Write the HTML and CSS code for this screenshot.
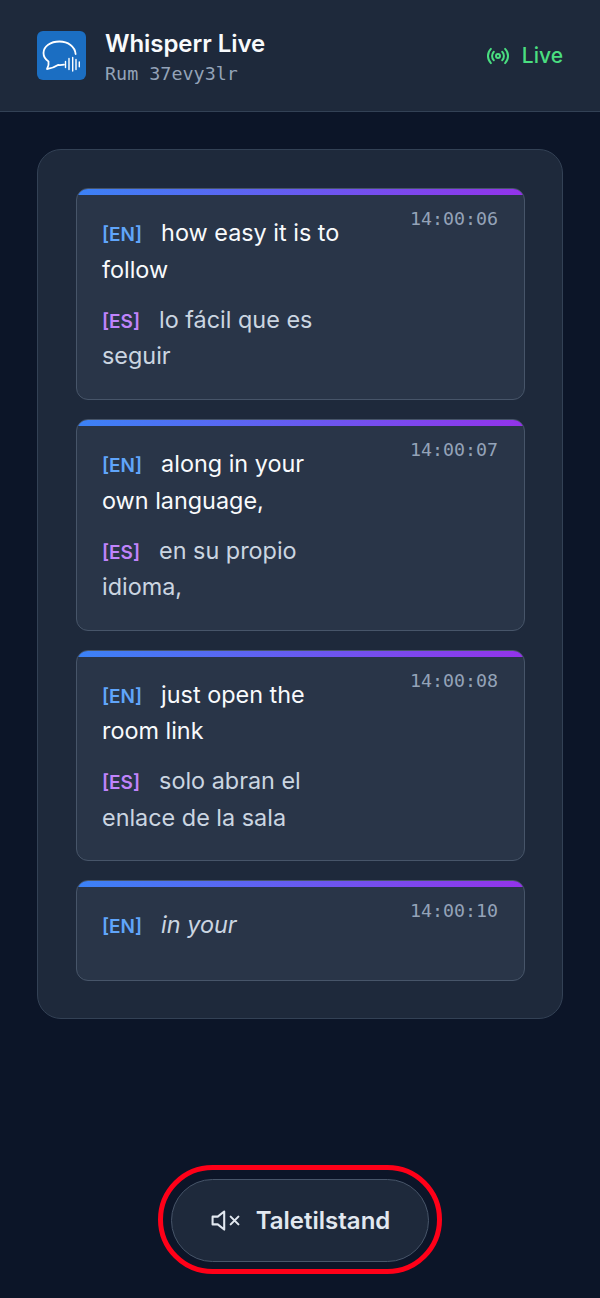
FILE: index.html
```html
<!DOCTYPE html>
<html lang="en">
  <head>
    <meta charset="UTF-8" />
    <title>Whisperr Live</title>
    <link rel="stylesheet" href="styles.css">
  </head>
  <body>
    <header class="top-bar">
      <div class="brand">
        <div class="logo">
          <svg viewBox="0 0 49 49" width="49" height="49" fill="none" stroke="#fff" stroke-linecap="round" stroke-linejoin="round">
            <path stroke-width="1.800" d="M38.600 23C38 15.500 31 10.500 22.500 10.500 13.500 10.500 6.500 15.500 6.500 22c0 3.500 2 6.500 5 8.500.5 2.500 0 5-1.500 7.500 4-.5 8-2 11-4 2 .2 4 .1 6-.3"/>
            <path stroke-width="1.400" d="M28.500 30.500v6M32 27.500v11M35.700 26.500v13.500M39 28.500v10M42.300 31v4.700"/>
          </svg>
        </div>
        <div class="brand-text">
          <h1>Whisperr Live</h1>
          <p>Rum 37evy3lr</p>
        </div>
      </div>
      <div class="status">
        <svg viewBox="0 0 24 24" width="24" height="24" fill="none" stroke="currentColor" stroke-width="2" stroke-linecap="round" stroke-linejoin="round">
          <path d="M4.900 19.100C1 15.200 1 8.800 4.900 4.900"/>
          <path d="M7.800 16.200c-2.300-2.300-2.300-6.100 0-8.500"/>
          <circle cx="12" cy="12" r="2"/>
          <path d="M16.200 7.800c2.300 2.300 2.300 6.100 0 8.500"/>
          <path d="M19.100 4.900C23 8.800 23 15.100 19.100 19.100"/>
        </svg>
        <span>Live</span>
      </div>
    </header>

    <main class="content">
      <section class="panel">
        <article class="entry">
          <div class="entry-text">
            <p class="line source"><span class="tag tag-en">[EN]</span>how easy it is to follow</p>
            <p class="line target"><span class="tag tag-es">[ES]</span>lo fácil que es seguir</p>
          </div>
          <time>14:00:06</time>
        </article>
        <article class="entry">
          <div class="entry-text">
            <p class="line source"><span class="tag tag-en">[EN]</span>along in your own language,</p>
            <p class="line target"><span class="tag tag-es">[ES]</span>en su propio idioma,</p>
          </div>
          <time>14:00:07</time>
        </article>
        <article class="entry">
          <div class="entry-text">
            <p class="line source"><span class="tag tag-en">[EN]</span>just open the room link</p>
            <p class="line target"><span class="tag tag-es">[ES]</span>solo abran el enlace de la sala</p>
          </div>
          <time>14:00:08</time>
        </article>
        <article class="entry entry-partial">
          <div class="entry-text">
            <p class="line partial"><span class="tag tag-en">[EN]</span><em>in your</em></p>
          </div>
          <time>14:00:10</time>
        </article>
      </section>
    </main>

    <footer class="actions">
      <button type="button" class="speech-btn">
        <svg viewBox="0 0 24 24" width="31" height="31" fill="none" stroke="currentColor" stroke-width="1.600" stroke-linecap="round" stroke-linejoin="round">
          <path d="M11 5 6 9H2v6h4l5 4z"/>
          <path d="M22 9l-6 6M16 9l6 6"/>
        </svg>
        <span>Taletilstand</span>
      </button>
      <div class="highlight-ring"></div>
    </footer>
  </body>
</html>
```

FILE: styles.css
```css
:root {
  --bg: #0c1528;
  --surface: #1e293b;
  --card: #293548;
  --border: #334155;
  --card-border: #475569;
  --muted: #94a3b8;
}

* {
  box-sizing: border-box;
}

body {
  margin: 0;
  height: 1298px;
  overflow: hidden;
  display: flex;
  flex-direction: column;
  background-color: var(--bg);
  font-family: "Inter", sans-serif;
  color: #f8fafc;
}

.top-bar {
  height: 112px;
  padding: 0 37px;
  display: flex;
  align-items: center;
  justify-content: space-between;
  background-color: var(--surface);
  border-bottom: 1px solid var(--border);
}

.brand {
  display: flex;
  align-items: center;
  gap: 19px;
}

.logo {
  width: 49px;
  height: 49px;
  border-radius: 6px;
  background-color: #1b6ec2;
}

.logo svg {
  display: block;
}

.brand-text {
  padding-top: 3px;
}

.brand-text h1 {
  margin: 0;
  font-size: 24px;
  line-height: 30px;
  font-weight: 600;
  letter-spacing: -0.05px;
}

.brand-text p {
  margin: 4px 0 0;
  font-family: "DejaVu Sans Mono", monospace;
  font-size: 18.400px;
  line-height: 22px;
  color: var(--muted);
}

.status {
  display: flex;
  align-items: center;
  gap: 12px;
  color: #4ade80;
  font-size: 21px;
  font-weight: 500;
}

.content {
  padding: 37px 37px 0;
}

.panel {
  padding: 38.400px 37.500px 37.600px;
  display: flex;
  flex-direction: column;
  gap: 19px;
  background-color: var(--surface);
  border: 1px solid var(--border);
  border-radius: 24px;
}

.entry {
  position: relative;
  overflow: hidden;
  display: flex;
  justify-content: space-between;
  align-items: flex-start;
  padding: 26px 25.500px 24.170px;
  background-color: var(--card);
  border: 1px solid var(--card-border);
  border-radius: 12px;
}

.entry::before {
  content: "";
  position: absolute;
  top: 0;
  left: 0;
  right: 0;
  height: 6px;
  background: linear-gradient(90deg, #3b82f6, #9333ea);
}

.entry-partial {
  padding-bottom: 36px;
}

.entry-text {
  width: 245px;
}

.entry time {
  margin-top: -8px;
  font-family: "DejaVu Sans Mono", monospace;
  font-size: 18.300px;
  line-height: 24px;
  color: var(--muted);
}

.line {
  margin: 0;
  font-size: 23.400px;
  line-height: 36.500px;
}

.source {
  color: #f8fafc;
}

.target {
  margin-top: 13.500px;
  color: #cbd5e1;
}

.partial em {
  color: #cbd5e1;
}

.tag {
  margin-right: 19px;
  font-size: 19px;
  line-height: 1;
  font-weight: 600;
}

.tag-en {
  color: #60a5fa;
}

.tag-es {
  color: #c084fc;
}

.actions {
  position: relative;
  flex: 1;
  display: flex;
  justify-content: center;
  padding-top: 159.500px;
}

.speech-btn {
  width: 258px;
  height: 83px;
  display: flex;
  align-items: center;
  justify-content: center;
  gap: 15px;
  background-color: var(--surface);
  border: 1px solid var(--card-border);
  border-radius: 42px;
  font-family: "Inter", sans-serif;
  font-size: 24px;
  font-weight: 600;
  color: #e2e8f0;
}

.highlight-ring {
  position: absolute;
  left: 158px;
  top: 146px;
  width: 284px;
  height: 108.500px;
  border: 5px solid #ff0018;
  border-radius: 55px;
  pointer-events: none;
}
```
